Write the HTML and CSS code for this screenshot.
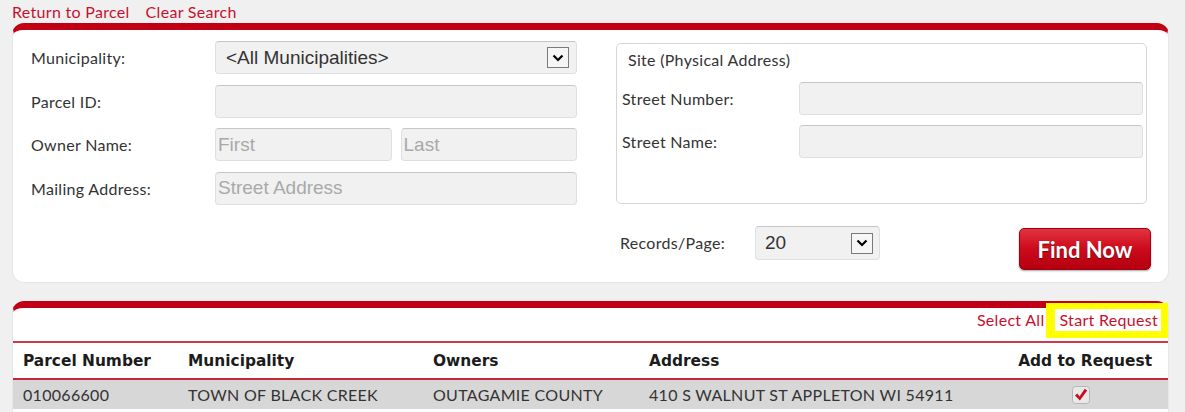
FILE: index.html
```html
<!DOCTYPE html>
<html>
<head>
<meta charset="utf-8">
<link rel="stylesheet" href="styles.css">
</head>
<body>
<div class="toplinks"><a href="#">Return to Parcel</a><a href="#">Clear Search</a></div>

<section class="panel search">
  <div class="left">
    <div class="row">
      <label>Municipality:</label>
      <div class="field select"><span>&lt;All Municipalities&gt;</span><span class="arrow"><svg width="12" height="8" viewBox="0 0 12 8"><polyline points="1.5,1.5 6,6 10.5,1.5" fill="none" stroke="#000" stroke-width="2.2"/></svg></span></div>
    </div>
    <div class="row">
      <label>Parcel ID:</label>
      <div class="field"></div>
    </div>
    <div class="row">
      <label>Owner Name:</label>
      <div class="pair">
        <div class="field placeholder">First</div>
        <div class="field placeholder">Last</div>
      </div>
    </div>
    <div class="row">
      <label>Mailing Address:</label>
      <div class="field placeholder">Street Address</div>
    </div>
  </div>
  <div class="right">
    <div class="fieldset">
      <div class="legend">Site (Physical Address)</div>
      <div class="frow"><label>Street Number:</label><div class="field"></div></div>
      <div class="frow"><label>Street Name:</label><div class="field"></div></div>
    </div>
    <div class="bottom">
      <label>Records/Page:</label>
      <div class="field select small"><span>20</span><span class="arrow"><svg width="12" height="8" viewBox="0 0 12 8"><polyline points="1.5,1.5 6,6 10.5,1.5" fill="none" stroke="#000" stroke-width="2.2"/></svg></span></div>
      <button class="find">Find Now</button>
    </div>
  </div>
</section>

<section class="panel results">
  <div class="actions">
    <a href="#" class="selectall">Select All</a>
    <a href="#" class="start">Start Request</a>
  </div>
  <table>
    <colgroup>
      <col class="c1"><col class="c2"><col class="c3"><col class="c4"><col class="c5">
    </colgroup>
    <thead>
      <tr><th>Parcel Number</th><th>Municipality</th><th>Owners</th><th>Address</th><th class="req">Add to Request</th></tr>
    </thead>
    <tbody>
      <tr>
        <td>010066600</td>
        <td>TOWN OF BLACK CREEK</td>
        <td>OUTAGAMIE COUNTY</td>
        <td>410 S WALNUT ST APPLETON WI 54911</td>
        <td class="chk"><svg width="18" height="18" viewBox="0 0 18 18"><rect x="0.5" y="0.5" width="17" height="17" rx="3" fill="#e9e9e9" stroke="#b5b5b5"/><path d="M3 9.4 L5.4 7.6 L7.5 10.5 L12.8 2.8 L15.2 4.4 L7.9 14.6 Z" fill="#cc0a1e"/></svg></td>
      </tr>
    </tbody>
  </table>
</section>
</body>
</html>
```

FILE: styles.css
```css
body {
  margin: 0;
  background: #f0f0f0;
  font-family: Lato, "Liberation Sans", sans-serif;
  color: #333;
}

a {
  color: #c8102e;
  text-decoration: none;
}

.toplinks {
  height: 23px;
  padding-left: 12px;
  display: flex;
  align-items: center;
  gap: 16px;
  font-size: 16px;
  letter-spacing: 0.3px;
}

.panel {
  margin-left: 12px;
  width: 1157px;
  box-sizing: border-box;
  background: #fff;
  border: 1px solid #e3e6ea;
  border-top: 7px solid #c10016;
  border-radius: 12px;
}

.search {
  display: flex;
  gap: 39px;
  padding: 11px 17px 12px 18px;
}

.left {
  width: 546px;
  display: flex;
  flex-direction: column;
  gap: 10.5px;
}

.row {
  display: flex;
  align-items: center;
  height: 33px;
}

.row label,
.frow label,
.legend,
.bottom label {
  font-size: 16px;
  letter-spacing: 0.3px;
}

.row label {
  width: 184px;
  flex: none;
}

.field {
  flex: 1;
  height: 33px;
  box-sizing: border-box;
  background: #f1f1f1;
  border: 1px solid #dde0e3;
  border-top-color: #c6c6c6;
  border-radius: 4px;
  font-family: "Liberation Sans", Arial, sans-serif;
  font-size: 19px;
  color: #333;
  padding-left: 2px;
  display: flex;
  align-items: center;
}

.placeholder {
  color: #a9a9a9;
}

.select {
  padding-left: 10px;
}

.arrow {
  margin-left: auto;
  margin-right: 7px;
  width: 22px;
  height: 21px;
  box-sizing: border-box;
  border: 1px solid #7a7a7a;
  background: #f6f6f6;
  display: flex;
  align-items: center;
  justify-content: center;
}

.pair {
  flex: 1;
  display: flex;
  gap: 9px;
}

.right {
  width: 535px;
}

.fieldset {
  margin-top: 2px;
  width: 531px;
  height: 161px;
  box-sizing: border-box;
  border: 1px solid #d6d6d6;
  border-radius: 5px;
  padding: 6px 3px 0 5px;
}

.legend {
  height: 20px;
  line-height: 20px;
  padding-left: 6px;
  margin-bottom: 12px;
}

.frow {
  display: flex;
  align-items: center;
  height: 33px;
  margin-bottom: 10px;
}

.frow label {
  width: 177px;
  flex: none;
}

.bottom {
  margin-top: 22px;
  display: flex;
  align-items: flex-start;
  padding-left: 4px;
}

.bottom label {
  width: 135px;
  flex: none;
  height: 34px;
  line-height: 34px;
}

.field.small {
  flex: none;
  width: 125px;
  height: 34px;
  padding-left: 9px;
}

.field.small .arrow {
  margin-right: 6px;
}

.find {
  margin-left: auto;
  margin-top: 2px;
  width: 132px;
  height: 42px;
  border: 1px solid #9e0010;
  border-radius: 5px;
  background: linear-gradient(#e2333f, #cc0a1c 50%, #b5000f);
  color: #fff;
  font-family: Lato, sans-serif;
  font-weight: bold;
  font-size: 22px;
  text-shadow: 0 1px 1px rgba(0, 0, 0, 0.45);
  box-shadow: 0 1px 2px rgba(0, 0, 0, 0.35);
  padding: 0;
}

.results {
  margin-top: 18px;
  padding-bottom: 20px;
}

.actions {
  height: 33px;
  display: flex;
  justify-content: flex-end;
  align-items: flex-start;
  font-size: 16px;
  letter-spacing: 0.3px;
}

.selectall {
  line-height: 24px;
  margin-right: 2px;
}

.start {
  margin-top: -5px;
  height: 35px;
  box-sizing: border-box;
  border: solid #ffff00;
  border-width: 6px 7px 7px 9px;
  padding: 0 3px 0 4px;
  line-height: 22px;
  background: #fff;
}

table {
  width: 100%;
  border-collapse: collapse;
  table-layout: fixed;
}

.c1 { width: 165px; }
.c2 { width: 245px; }
.c3 { width: 216px; }
.c5 { width: 160px; }

th {
  font-family: "DejaVu Sans", Verdana, sans-serif;
  font-weight: bold;
  font-size: 15.4px;
  color: #1c1c1c;
  text-align: left;
  padding: 0 10px;
  height: 35px;
  border-top: 2px solid #cc3b47;
  border-bottom: 2px solid #c42a36;
  white-space: nowrap;
}

th.req {
  text-align: right;
  padding-right: 16px;
}

td {
  height: 29px;
  padding: 0 10px;
  font-size: 16px;
  letter-spacing: 0.3px;
  background: #d7d7d7;
  white-space: nowrap;
  color: #333;
}

td.chk {
  text-align: center;
  padding-right: 24px;
  line-height: 0;
}
```
